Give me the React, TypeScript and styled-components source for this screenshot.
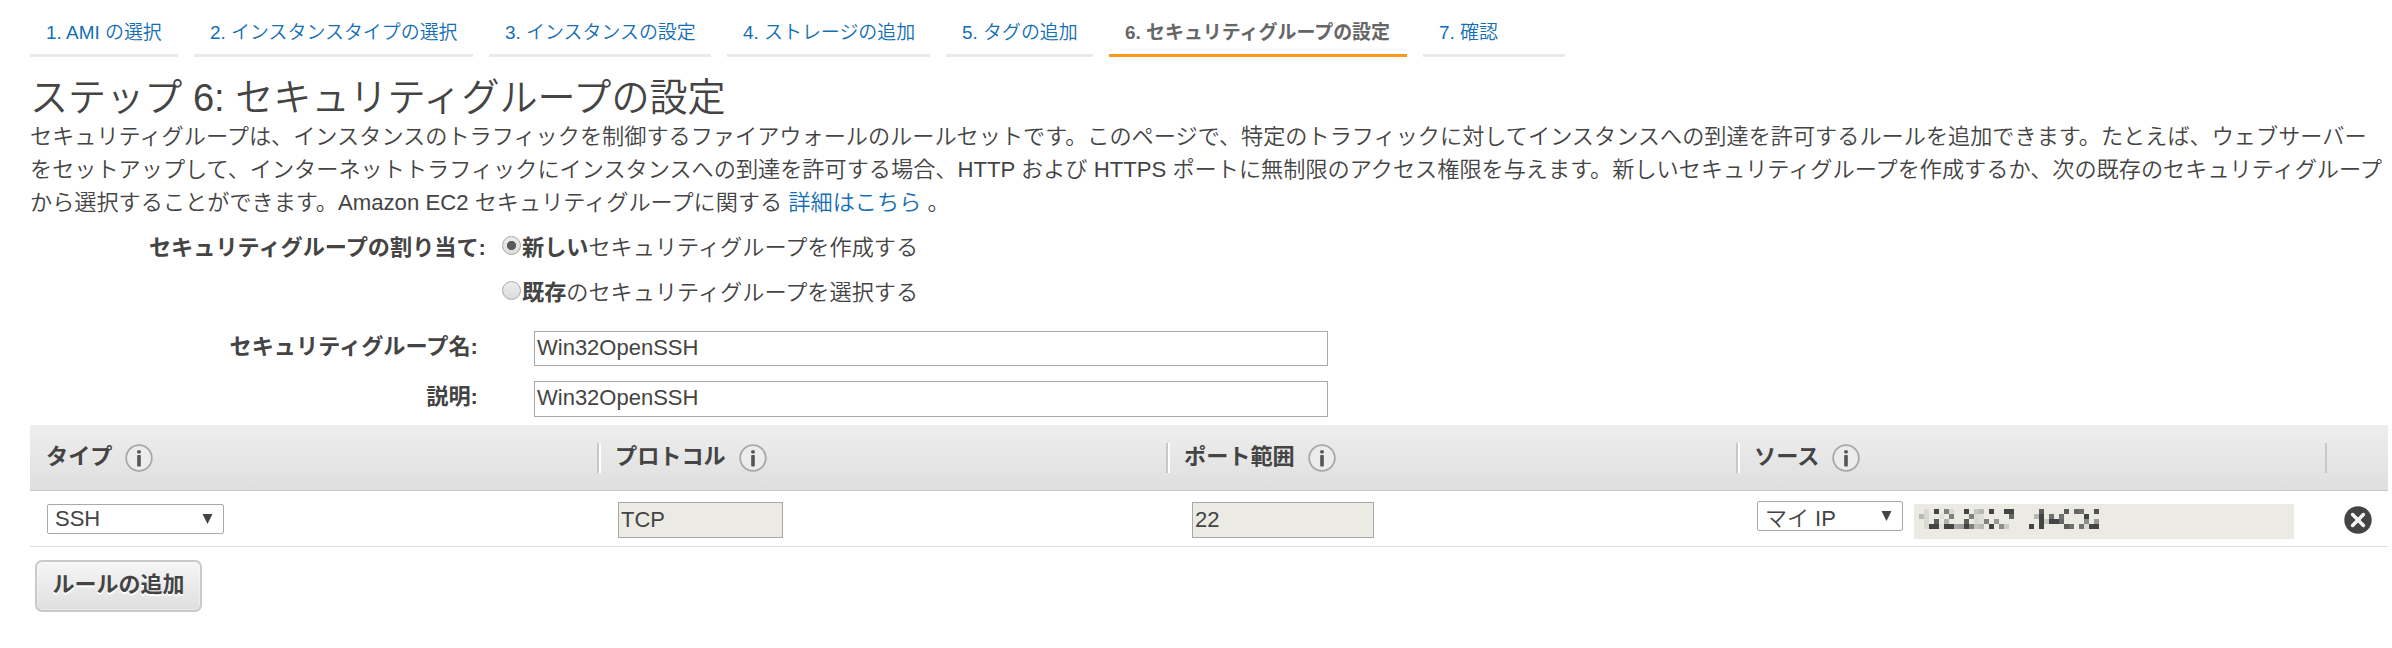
import React from "react";
import styled, { createGlobalStyle } from "styled-components";

const GlobalStyle = createGlobalStyle`
  * { box-sizing: border-box; }
  body {
    margin: 0;
    background: #fff;
    color: #444;
    font: 350 22.17px/33px "Liberation Sans", "Noto Sans CJK JP", sans-serif;
    text-spacing-trim: space-all;
    overflow: hidden;
  }
`;

const Page = styled.main`
  padding: 18px 4px 0 30px;
  height: 648px;
`;

const Tabs = styled.nav`
  display: flex;
  gap: 16px;
`;

const Tab = styled.a<{ $width: number; $active?: boolean }>`
  width: ${(p) => p.$width}px;
  height: 39px;
  padding-left: 16px;
  border-bottom: 3px solid ${(p) => (p.$active ? "#f8981d" : "#eaeaea")};
  color: ${(p) => (p.$active ? "#666" : "#146eb4")};
  font-size: 18.95px;
  font-weight: ${(p) => (p.$active ? 700 : 350)};
  line-height: 30px;
  white-space: nowrap;
`;

const Title = styled.h1`
  margin: 19px 0 0;
  font-size: 38.1px;
  font-weight: 350;
  line-height: 44px;
`;

const Intro = styled.p`
  margin: 0;
  white-space: nowrap;
`;

const Link = styled.a`
  color: #146eb4;
`;

const Assign = styled.div`
  display: grid;
  grid-template-columns: 456px auto;
  column-gap: 16px;
  row-gap: 15px;
  margin-top: 14px;
  line-height: 30px;
`;

const AssignLabel = styled.div`
  grid-row: span 2;
  text-align: right;
  font-weight: 700;
`;

const Option = styled.label`
  display: flex;
  align-items: flex-start;
  gap: 1px;
  b { font-weight: 700; }
`;

const Radio = styled.span<{ $checked?: boolean }>`
  width: 19px;
  height: 19px;
  margin-top: 3px;
  border: 1px solid #a9a9a9;
  border-radius: 50%;
  background: ${(p) => (p.$checked ? "radial-gradient(circle, #5c5c5c 4.2px, transparent 5px)," : "")}
    linear-gradient(#ececec, #dcdcdc);
`;

const Field = styled.div<{ $top: number; $height: number }>`
  display: flex;
  height: ${(p) => p.$height}px;
  margin-top: ${(p) => p.$top}px;
`;

const FieldLabel = styled.div`
  width: 448px;
  margin-right: 56px;
  text-align: right;
  font-weight: 700;
  line-height: 31px;
`;

const Input = styled.div<{ $width: number; $disabled?: boolean }>`
  width: ${(p) => p.$width}px;
  height: 36px;
  padding-left: 2px;
  border: 1px solid #a9a9a9;
  background: ${(p) => (p.$disabled ? "#ebebe4" : "#fff")};
  font-size: 22px;
  line-height: 33px;
`;

const TextInput = styled(Input)`
  height: 100%;
  line-height: 31px;
`;

const HeadRow = styled.div`
  display: grid;
  grid-template-columns: 567px 569px 570px 589px 1fr;
  height: 66px;
  margin-top: 8px;
  padding-top: 18px;
  border-bottom: 1px solid #c6c6c6;
  background: linear-gradient(#eee, #dfdfdf);
`;

const HeadCell = styled.div<{ $rule?: boolean }>`
  display: flex;
  align-items: flex-start;
  height: 30px;
  padding-left: 16px;
  border-left: ${(p) => (p.$rule ? "2px solid #c8c8c8" : "none")};
  box-shadow: ${(p) => (p.$rule ? "inset 2px 0 #fff" : "none")};
  font-weight: 700;
  line-height: 28px;
`;

const LastHeadCell = styled.div`
  height: 30px;
  border-left: 2px solid #c8c8c8;
`;

const InfoSvg = styled.svg`
  width: 28px;
  height: 28px;
  margin: 1px 0 0 13px;
`;

const RuleRow = styled.div`
  display: grid;
  grid-template-columns: 588px 574px 565px 587px 1fr;
  height: 56px;
  border-bottom: 1px solid #dedede;
`;

const RuleCell = styled.div<{ $top: number; $left?: number }>`
  display: flex;
  align-items: flex-start;
  padding: ${(p) => p.$top}px 0 0 ${(p) => p.$left ?? 0}px;
`;

const Select = styled.div<{ $width: number; $line: number }>`
  display: flex;
  justify-content: space-between;
  width: ${(p) => p.$width}px;
  height: 30px;
  padding: 0 10px 0 7px;
  border: 1px solid #a9a9a9;
  border-radius: 2px;
  background: #fff;
  font-size: 22px;
  line-height: ${(p) => p.$line}px;
`;

const Arrow = styled.svg`
  width: 11px;
  height: 10px;
  margin-top: 9px;
`;

const SourceBox = styled.div`
  width: 380px;
  height: 35px;
  margin: 3px 0 0 11px;
  padding: 5px 0 0 5px;
  background: #ebebe4;
`;

const Blocks = styled.svg`
  display: block;
  width: 180px;
  height: 20px;
`;

const AddButton = styled.button`
  display: block;
  width: 167px;
  height: 52px;
  margin: 13px 0 0 5px;
  padding: 0 0 3px;
  border: 2px solid #c9c9c9;
  border-radius: 7px;
  background: linear-gradient(#f6f6f6, #dfdfdf);
  box-shadow: inset 0 0 0 1px rgba(255, 255, 255, 0.35);
  color: #444;
  font: 700 22px/44px "Liberation Sans", "Noto Sans CJK JP", sans-serif;
  text-shadow: 0 2px 0 #fff;
`;

const TABS = [
  { text: "1. AMI の選択", width: 148 },
  { text: "2. インスタンスタイプの選択", width: 279 },
  { text: "3. インスタンスの設定", width: 222 },
  { text: "4. ストレージの追加", width: 203 },
  { text: "5. タグの追加", width: 147 },
  { text: "6. セキュリティグループの設定", width: 298, active: true },
  { text: "7. 確認", width: 142 },
];

/* Redacted address: one [column, grey] pair per 5px block, row by row. */
const BLOCKS: [number, string][][] = [
  [[1, "d9d9d4"], [3, "444"], [5, "80807c"], [6, "d9d9d4"], [9, "444"], [11, "c4c4bf"], [12, "b8b8b3"], [14, "444"], [17, "444"], [18, "444"], [24, "5c5c5a"], [29, "5c5c5a"], [31, "666664"], [32, "70706e"], [35, "505050"]],
  [[0, "b8b8b3"], [1, "d9d9d4"], [4, "e0e0da"], [6, "80807c"], [10, "80807c"], [11, "d9d9d4"], [12, "e0e0da"], [18, "666664"], [23, "b8b8b3"], [24, "444"], [26, "70706e"], [28, "70706e"], [33, "444"]],
  [[1, "d9d9d4"], [3, "5c5c5a"], [5, "b0b0ac"], [9, "5c5c5a"], [11, "d9d9d4"], [12, "e0e0da"], [13, "80807c"], [15, "999995"], [24, "444"], [25, "c8c8c3"], [26, "444"], [27, "444"], [28, "666664"], [33, "8c8c88"], [35, "999995"]],
  [[1, "d9d9d4"], [2, "444"], [3, "444"], [4, "e0e0da"], [5, "444"], [6, "444"], [7, "a8a8a4"], [8, "a0a09c"], [9, "444"], [10, "80807c"], [11, "c4c4bf"], [12, "b8b8b3"], [14, "444"], [16, "8c8c88"], [17, "ccccc6"], [22, "444"], [24, "444"], [29, "5c5c5a"], [30, "70706e"], [32, "70706e"], [33, "dadad4"], [34, "444"], [35, "444"]],
];

const Mosaic = () => (
  <Blocks shapeRendering="crispEdges">
    {BLOCKS.map((row, y) =>
      row.map(([x, c]) => <rect key={`${x}-${y}`} x={x * 5} y={y * 5} width="5" height="5" fill={`#${c}`} />)
    )}
  </Blocks>
);

const InfoIcon = () => (
  <InfoSvg viewBox="0 0 28 28">
    <circle cx="14" cy="14" r="12.8" fill="#ececec" stroke="#a8a8a8" strokeWidth="1.8" />
    <rect x="12.2" y="6.2" width="3.6" height="3.2" rx="1" fill="#555" />
    <rect x="12.2" y="11" width="3.6" height="11.6" rx="0.8" fill="#555" />
  </InfoSvg>
);

const DownArrow = () => (
  <Arrow viewBox="0 0 11 10">
    <path d="M0.5 0h10L5.5 10z" fill="#444" />
  </Arrow>
);

const CloseIcon = () => (
  <svg width="28" height="28" viewBox="0 0 28 28">
    <circle cx="14" cy="14" r="13.7" fill="#444" />
    <path d="M8.6 8.6l10.8 10.8M19.4 8.6L8.6 19.4" stroke="#f4f4f4" strokeWidth="3.6" strokeLinecap="round" />
  </svg>
);

export default function App() {
  return (
    <Page>
      <GlobalStyle />
      <Tabs>
        {TABS.map((t) => (
          <Tab key={t.text} $width={t.width} $active={t.active}>{t.text}</Tab>
        ))}
      </Tabs>
      <Title>ステップ 6: セキュリティグループの設定</Title>
      <Intro>
        セキュリティグループは、インスタンスのトラフィックを制御するファイアウォールのルールセットです。このページで、特定のトラフィックに対してインスタンスへの到達を許可するルールを追加できます。たとえば、ウェブサーバー
        <br />
        をセットアップして、インターネットトラフィックにインスタンスへの到達を許可する場合、HTTP および HTTPS ポートに無制限のアクセス権限を与えます。新しいセキュリティグループを作成するか、次の既存のセキュリティグループ
        <br />
        から選択することができます。Amazon EC2 セキュリティグループに関する <Link>詳細はこちら</Link> 。
      </Intro>
      <Assign>
        <AssignLabel>セキュリティグループの割り当て:</AssignLabel>
        <Option><Radio $checked /><span><b>新しい</b>セキュリティグループを作成する</span></Option>
        <Option><Radio /><span><b>既存</b>のセキュリティグループを選択する</span></Option>
      </Assign>
      <Field $top={23} $height={35}>
        <FieldLabel>セキュリティグループ名:</FieldLabel>
        <TextInput $width={794}>Win32OpenSSH</TextInput>
      </Field>
      <Field $top={15} $height={36}>
        <FieldLabel>説明:</FieldLabel>
        <TextInput $width={794}>Win32OpenSSH</TextInput>
      </Field>
      <HeadRow>
        <HeadCell>タイプ<InfoIcon /></HeadCell>
        <HeadCell $rule>プロトコル<InfoIcon /></HeadCell>
        <HeadCell $rule>ポート範囲<InfoIcon /></HeadCell>
        <HeadCell $rule>ソース<InfoIcon /></HeadCell>
        <LastHeadCell />
      </HeadRow>
      <RuleRow>
        <RuleCell $top={13} $left={17}>
          <Select $width={177} $line={28}>SSH<DownArrow /></Select>
        </RuleCell>
        <RuleCell $top={11}><Input $width={165} $disabled>TCP</Input></RuleCell>
        <RuleCell $top={11}><Input $width={182} $disabled>22</Input></RuleCell>
        <RuleCell $top={10}>
          <Select $width={146} $line={33}>マイ IP<DownArrow /></Select>
          <SourceBox><Mosaic /></SourceBox>
        </RuleCell>
        <RuleCell $top={15}><CloseIcon /></RuleCell>
      </RuleRow>
      <AddButton>ルールの追加</AddButton>
    </Page>
  );
}
